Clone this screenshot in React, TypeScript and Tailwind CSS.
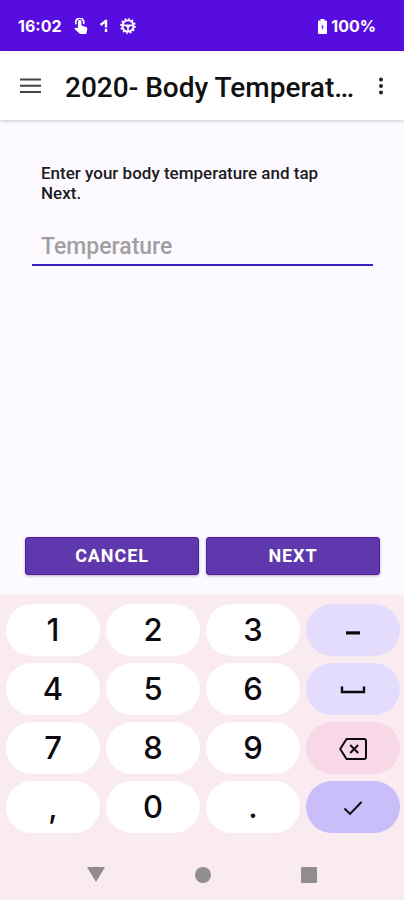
import type { ReactNode } from 'react';

type Key = { label: string; content: ReactNode; tone: string };

const PLAIN = 'bg-white';
const SOFT = 'bg-[#e4dcfc]';

const SpaceIcon = () => (
  <svg width="26" height="8" viewBox="0 0 26 8" fill="none" stroke="currentColor" strokeWidth="2.400">
    <path d="M2 0.500v5.500h22V0.500" />
  </svg>
);

const BackspaceIcon = () => (
  <svg width="28" height="22" viewBox="0 0 28 22" fill="none" stroke="currentColor" strokeWidth="2" strokeLinejoin="round" className="mt-px">
    <path d="M7.500 1H25a2 2 0 0 1 2 2v16a2 2 0 0 1-2 2H7.500L1.200 11z" />
    <path d="M11.200 7l8 8M19.200 7l-8 8" />
  </svg>
);

const CheckIcon = () => (
  <svg width="20" height="16" viewBox="0 0 20 16" fill="none" stroke="currentColor" strokeWidth="1.900">
    <path d="M1.500 8.500l5.500 5.500L18.500 2" />
  </svg>
);

const MinusIcon = () => (
  <svg width="14" height="4" viewBox="0 0 14 4" className="mt-1">
    <path d="M0 0.300h14v3.200H0z" fill="currentColor" />
  </svg>
);

const digit = (d: string): Key => ({ label: d, content: d, tone: PLAIN });

const keys: Key[] = [
  digit('1'), digit('2'), digit('3'),
  { label: 'Minus', content: <MinusIcon />, tone: SOFT },
  digit('4'), digit('5'), digit('6'),
  { label: 'Space', content: <SpaceIcon />, tone: SOFT },
  digit('7'), digit('8'), digit('9'),
  { label: 'Backspace', content: <BackspaceIcon />, tone: 'bg-[#f8d7e7]' },
  digit(','), digit('0'), digit('.'),
  { label: 'Done', content: <CheckIcon />, tone: 'bg-[#c9bdfa]' },
];

function StatusBar() {
  return (
    <div className="flex h-[51px] items-center justify-between bg-[#570de0] pr-7 pl-[18px] pt-px font-['Inter',sans-serif] text-base font-bold text-white">
      <div className="flex items-center">
        <span>16:02</span>
        <svg width="14" height="16" viewBox="0 0 14 16" className="ml-3" fill="currentColor">
          <path d="M4 3.500a1.700 1.700 0 0 1 3.400 0V7.400l4.800 1.700c.8.300 1.100.9 1 1.600L12.600 15c-.1.600-.5 1-1.100 1H6.600c-.5 0-.9-.2-1.200-.5L.4 10.800l.9-.9c.3-.2.600-.3 1-.2l1.700.4z" />
          <path d="M2.300 6.300A4 4 0 1 1 9.300 6" fill="none" stroke="currentColor" strokeWidth="1.700" />
        </svg>
        <svg width="8" height="14" viewBox="0 0 8 14" className="ml-3" fill="none" stroke="currentColor" strokeWidth="2.400">
          <path d="M.5 6L5 2.600M4.500 2H6V8.500M6 9.800v3.200" />
        </svg>
        <svg width="16" height="16" viewBox="0 0 16 16" className="ml-3" fill="none" stroke="currentColor">
          <circle cx="8" cy="8" r="5.600" strokeWidth="1.900" />
          <circle cx="8" cy="8" r="7" strokeWidth="1.700" strokeDasharray="1.800 1.865" />
          <path d="M3 7.400h10M8 8v5" strokeWidth="1.600" />
          <path d="M5.500 8h5L8 10.500z" fill="currentColor" stroke="none" />
        </svg>
      </div>
      <div className="flex items-center gap-1">
        <svg width="9" height="15" viewBox="0 0 9 15" fill="currentColor">
          <path fillRule="evenodd" d="M2.500 0h4v1.500H8q1 0 1 1V14q0 1-1 1H1q-1 0-1-1V2.500q0-1 1-1h1.500zM4.600 5L3.200 8h1v3L5.900 7.800H4.600z" />
        </svg>
        <span>100%</span>
      </div>
    </div>
  );
}

function AppBar() {
  return (
    <header className="z-10 flex h-[69px] items-center bg-white pr-4 pl-5 shadow-[0_1px_4px_rgba(0,0,0,0.2)]">
      <button type="button" aria-label="Menu" className="shrink-0">
        <svg width="21" height="16" viewBox="0 0 21 16" stroke="#444" strokeWidth="1.900">
          <path d="M0 1.500h21M0 7.800h21M0 14h21" />
        </svg>
      </button>
      <h1 className="mr-4 ml-6 min-w-0 flex-1 truncate pt-1 text-[28px] leading-9 font-medium text-[#111]">2020- Body Temperature</h1>
      <button type="button" aria-label="More options" className="shrink-0">
        <svg width="14" height="18" viewBox="0 0 14 18" fill="#222">
          <circle cx="7" cy="2.500" r="2" />
          <circle cx="7" cy="9" r="2" />
          <circle cx="7" cy="15.500" r="2" />
        </svg>
      </button>
    </header>
  );
}

const actionClass =
  'h-[38px] flex-1 rounded-[3px] border border-[#4f1fa4] bg-[#6038ae] text-[18px] leading-5 font-bold tracking-wider text-white shadow-[0_1px_3px_rgba(0,0,0,0.3)]';

export default function App() {
  return (
    <div className="flex min-h-screen flex-col bg-[#fdfaff] font-['Roboto',sans-serif]">
      <StatusBar />
      <AppBar />
      <main className="flex flex-1 flex-col pt-[43px] pb-5">
        <label htmlFor="temperature" className="mr-[60px] ml-[41px] text-[17px] leading-5 font-medium text-[#1c1b1f]">
          Enter your body temperature and tap Next.
        </label>
        <input
          id="temperature"
          type="text"
          inputMode="decimal"
          placeholder="Temperature"
          className="mt-[23px] mr-[31px] ml-8 h-10 rounded-none border-b-2 border-[#3c20c0] bg-transparent px-[9px] pt-[3px] text-[23px] font-medium text-[#1c1b1f] outline-none placeholder:text-[#a09fa2]"
        />
        <div className="mt-auto flex gap-[7px] pr-6 pl-[25px]">
          <button type="button" className={actionClass}>CANCEL</button>
          <button type="button" className={actionClass}>NEXT</button>
        </div>
      </main>
      <section aria-label="Numeric keyboard" className="bg-[#faebf0] pt-[9px]">
        <div className="grid grid-cols-4 gap-x-[6px] gap-y-[7px] pr-1 pl-[6px]">
          {keys.map((key) => (
            <button
              key={key.label}
              type="button"
              aria-label={key.label}
              className={`flex h-[52px] items-center justify-center rounded-full pt-px font-['Inter',sans-serif] text-[31px] font-medium text-[#0c0a10] ${key.tone}`}
            >
              {key.content}
            </button>
          ))}
        </div>
        <nav className="flex h-[67px] items-center justify-center gap-[90px] pt-4 text-[#918c90]">
          <button type="button" aria-label="Back">
            <svg width="18" height="16" viewBox="0 0 18 16" fill="currentColor"><path d="M0 0h18L9 15z" /></svg>
          </button>
          <button type="button" aria-label="Home">
            <svg width="16" height="16" viewBox="0 0 16 16" fill="currentColor"><circle cx="8" cy="8" r="8" /></svg>
          </button>
          <button type="button" aria-label="Recent apps">
            <svg width="16" height="16" viewBox="0 0 16 16" fill="currentColor"><rect width="16" height="16" rx="1" /></svg>
          </button>
        </nav>
      </section>
    </div>
  );
}
